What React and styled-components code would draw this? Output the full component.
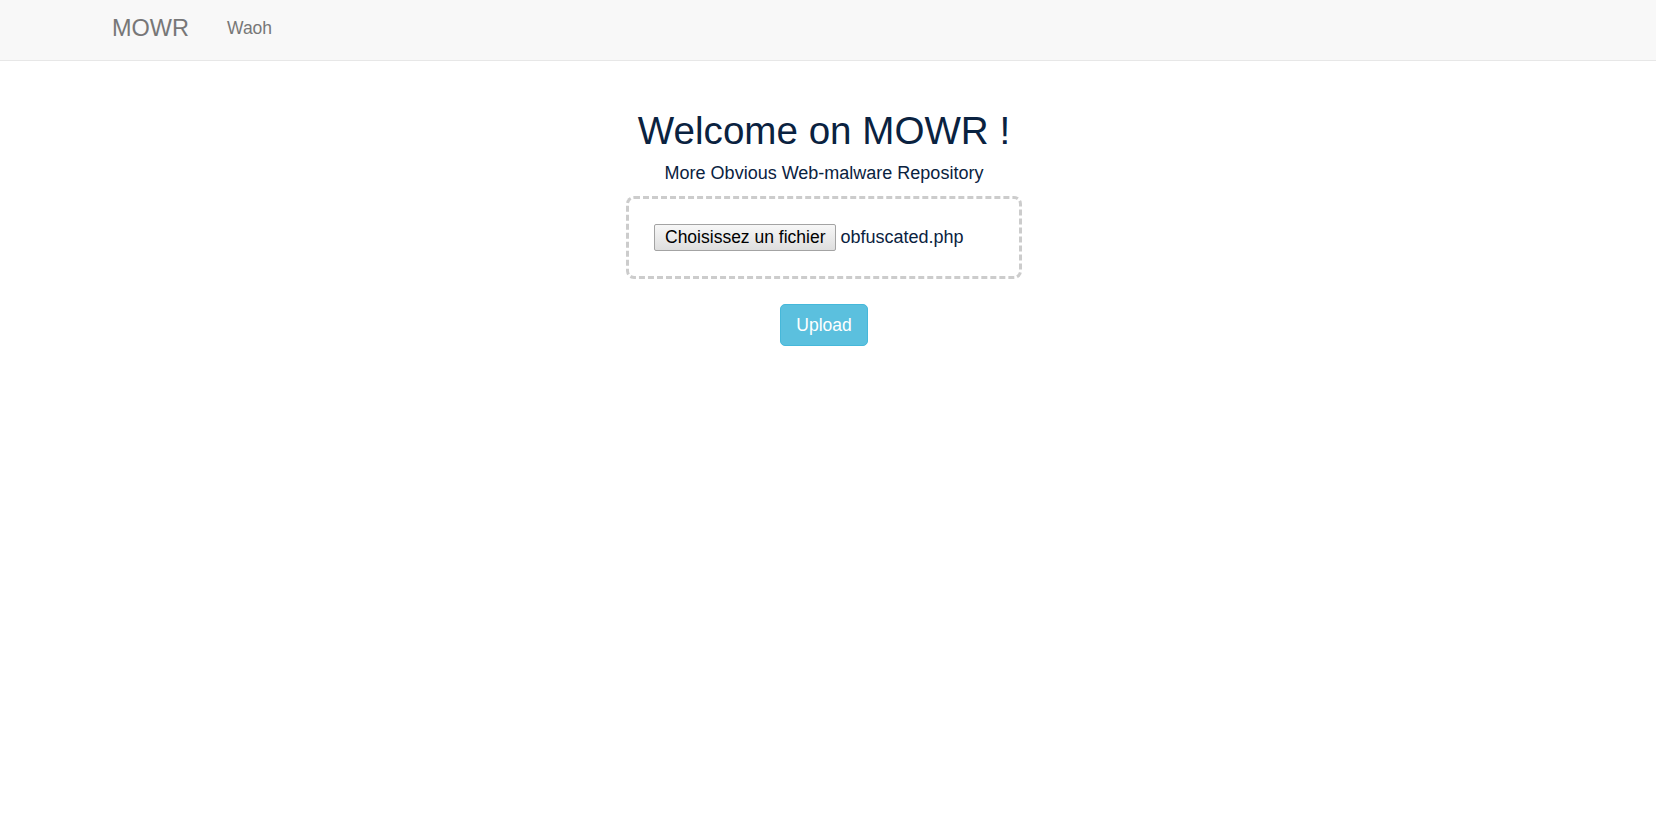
import * as React from 'react';
import styled, { createGlobalStyle } from 'styled-components';

const GlobalStyle = createGlobalStyle`
    html, body {
        margin: 0;
        padding: 0;
        background: #ffffff;
        font-family: "Liberation Sans", Arial, sans-serif;
    }
`;

export default function App() {
    return (
        <>
            <GlobalStyle/>
            <Navbar>
                <NavInner>
                    <Brand href={'#'}>MOWR</Brand>
                    <NavLink href={'#'}>Waoh</NavLink>
                </NavInner>
            </Navbar>
            <Main>
                <Title>Welcome on MOWR !</Title>
                <Subtitle>More Obvious Web-malware Repository</Subtitle>
                <DropZone>
                    <FileRow>
                        <FileButton type={'button'}>Choisissez un fichier</FileButton>
                        <FileName>obfuscated.php</FileName>
                    </FileRow>
                </DropZone>
                <UploadButton type={'button'}>Upload</UploadButton>
            </Main>
        </>
    );
}

const Navbar = styled.nav`
    background-color: #f8f8f8;
    border-bottom: 1px solid #e7e7e7;
    height: 60px;
`;

const NavInner = styled.div`
    display: flex;
    align-items: flex-start;
    gap: 38px;
    padding: 16px 0 0 112px;
`;

const Brand = styled.a`
    font-size: 23.5px;
    line-height: 25px;
    color: #777777;
    text-decoration: none;
`;

const NavLink = styled.a`
    font-size: 17.5px;
    line-height: 25px;
    color: #777777;
    text-decoration: none;
`;

const Main = styled.main`
    display: flex;
    flex-direction: column;
    align-items: center;
    padding-right: 8px;
    color: #0a2240;
`;

const Title = styled.h1`
    margin: 49px 0 0;
    font-size: 38.6px;
    line-height: 42px;
    font-weight: normal;
`;

const Subtitle = styled.p`
    margin: 8px 0 0;
    font-size: 18px;
    line-height: 26px;
`;

const DropZone = styled.div`
    box-sizing: border-box;
    width: 396px;
    margin-top: 10px;
    padding: 25px;
    border: 3px dashed #cccccc;
    border-radius: 8px;
`;

const FileRow = styled.div`
    display: flex;
    align-items: center;
    gap: 4px;
`;

const FileButton = styled.button`
    box-sizing: border-box;
    height: 27px;
    padding: 0 10px;
    font-family: "Liberation Sans", Arial, sans-serif;
    font-size: 17.5px;
    color: #000000;
    background: linear-gradient(#f7f7f7, #dedede);
    border: 1px solid #a3a3a3;
    border-radius: 2px;
`;

const FileName = styled.span`
    font-size: 18px;
    line-height: 25px;
`;

const UploadButton = styled.button`
    box-sizing: border-box;
    margin-top: 25px;
    height: 42px;
    padding: 0 15px;
    font-family: "Liberation Sans", Arial, sans-serif;
    font-size: 17.5px;
    color: #ffffff;
    background-color: #5bc0de;
    border: 1px solid #46b8da;
    border-radius: 5px;
`;
